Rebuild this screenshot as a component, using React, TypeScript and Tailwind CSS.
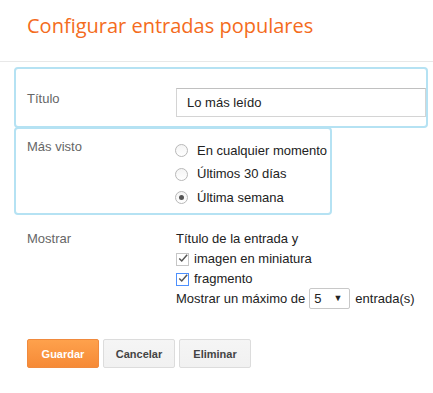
import { useState } from 'react';

const Radio = ({ checked, label, onSelect }: { checked: boolean; label: string; onSelect: () => void }) => (
    <label className="flex items-center h-[23.5px] cursor-pointer" onClick={onSelect}>
        <span className="w-[13px] h-[13px] rounded-full border border-[#b8b8b8] bg-gradient-to-b from-[#f4f4f4] to-white flex items-center justify-center">
            {checked && <span className="w-[5px] h-[5px] rounded-full bg-[#555]" />}
        </span>
        <span className="ml-[9px] text-[#222]">{label}</span>
    </label>
);

const Check = ({ checked, focused, label }: { checked: boolean; focused?: boolean; label: string }) => (
    <label className="flex items-center h-[20px]">
        <span
            className={`w-[13px] h-[13px] border bg-white flex items-center justify-center ${focused ? 'border-[#4d90fe]' : 'border-[#c6c6c6]'}`}
        >
            {checked && (
                <svg width="12" height="11" viewBox="0 0 12 11" className="-mt-[2px] ml-[1px]">
                    <path d="M1.5 5.5 L4.5 8.5 L11 1" fill="none" stroke="#555" strokeWidth="1.8" />
                </svg>
            )}
        </span>
        <span className="ml-[5px] text-[#222]">{label}</span>
    </label>
);

export default function App() {
    const [periodo, setPeriodo] = useState(2);
    const opciones = ['En cualquier momento', 'Últimos 30 días', 'Última semana'];

    return (
        <div className="w-[433px] h-[393px] bg-white text-[13px] leading-[16px] overflow-hidden" style={{ fontFamily: '"Liberation Sans", Arial, sans-serif' }}>
            {/* Cabecera */}
            <div className="h-[62px] border-b border-[#e8e8e8] pl-[27px] pt-[12px]">
                <h1 className="text-[20px] leading-[27px] text-[#f46b20] font-normal" style={{ fontFamily: '"Open Sans", sans-serif' }}>
                    Configurar entradas populares
                </h1>
            </div>

            {/* Título */}
            <div className="ml-[14px] mr-[5px] mt-[5px] border-2 border-[#b5e2f3] rounded-[4px] pl-[11px] pt-[19px] pb-[9px] grid grid-cols-[149px_1fr]">
                <div className="text-[#666] pt-[2.5px]">Título</div>
                <input
                    defaultValue="Lo más leído"
                    className="h-[29px] border border-[#d4d4d4] border-t-[#c0c0c0] px-[10px] text-[13px] text-[#222] outline-none"
                    style={{ fontFamily: '"Liberation Sans", Arial, sans-serif' }}
                />
            </div>

            {/* Más visto */}
            <div className="ml-[14px] -mt-[1px] w-[318px] border-2 border-[#b5e2f3] rounded-[4px] pl-[11px] pt-[10px] pb-[3.5px] grid grid-cols-[149px_1fr]">
                <div className="text-[#666]">Más visto</div>
                <div className="flex flex-col -ml-[1px]">
                    {opciones.map((op, i) => (
                        <Radio key={op} label={op} checked={periodo === i} onSelect={() => setPeriodo(i)} />
                    ))}
                </div>
            </div>

            {/* Mostrar */}
            <div className="mt-[16px] pl-[27px] grid grid-cols-[149px_1fr]">
                <div className="text-[#666]">Mostrar</div>
                <div className="flex flex-col text-[#222]">
                    <div className="h-[16px]">Título de la entrada y</div>
                    <div className="mt-[2px]">
                        <Check checked label="imagen en miniatura" />
                    </div>
                    <Check checked focused label="fragmento" />
                    <div className="flex items-center h-[21px] -mt-[1px]">
                        <span>Mostrar un máximo de</span>
                        <div className="ml-[4px] w-[41px] h-[21px] border border-[#c8c8c8] rounded-[2px] flex items-center justify-between pl-[4px] pr-[7px]">
                            <span>5</span>
                            <span className="text-[9px] leading-none">▼</span>
                        </div>
                        <span className="ml-[5px]">entrada(s)</span>
                    </div>
                </div>
            </div>

            {/* Botones */}
            <div className="mt-[30px] pl-[27px] flex gap-[4px] text-[11px] font-bold">
                <button className="w-[72px] h-[29px] rounded-[2px] border border-[#f08a3e] bg-gradient-to-b from-[#fea14c] to-[#f68a36] text-white">
                    Guardar
                </button>
                <button className="w-[72px] h-[29px] rounded-[2px] border border-[#dcdcdc] bg-gradient-to-b from-[#f5f5f5] to-[#f1f1f1] text-[#444]">
                    Cancelar
                </button>
                <button className="w-[72px] h-[29px] rounded-[2px] border border-[#dcdcdc] bg-gradient-to-b from-[#f5f5f5] to-[#f1f1f1] text-[#444]">
                    Eliminar
                </button>
            </div>
        </div>
    );
}
